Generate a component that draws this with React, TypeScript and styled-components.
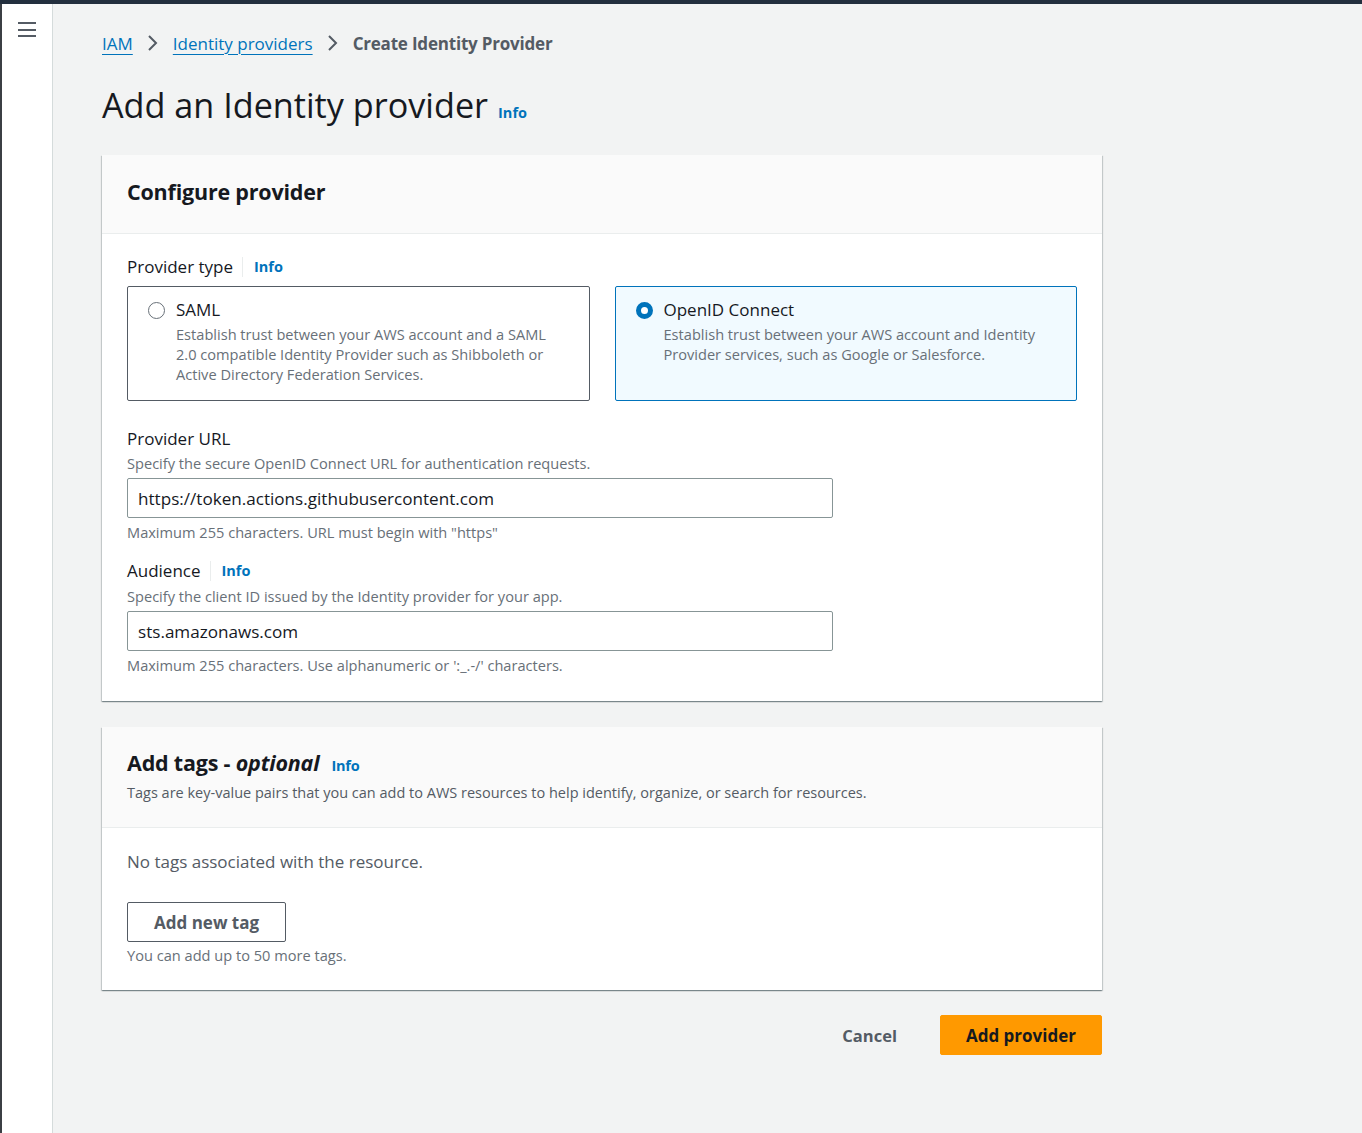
import React from "react";
import styled, { createGlobalStyle } from "styled-components";

const Global = createGlobalStyle`
  html, body { margin: 0; padding: 0; }
  body {
    font-family: "Open Sans", "Noto Sans", "Liberation Sans", sans-serif;
    color: #16191f;
    background: #f2f3f3;
  }
  * { box-sizing: border-box; }
`;

const Page = styled.div`
  width: 1362px;
  min-height: 1133px;
  display: flex;
  flex-direction: column;
  background: #f2f3f3;
`;

const TopStripe = styled.div`
  height: 4px;
  background: #232f3e;
`;

const Body = styled.div`
  flex: 1;
  display: flex;
`;

const SideNav = styled.nav`
  width: 53px;
  flex: none;
  background: #fff;
  border-left: 2px solid #3b3f44;
  border-right: 1px solid #d5dbdb;
  padding: 18px 0 0 16px;
`;

const Hamburger = styled.button`
  width: 20px;
  height: 15px;
  padding: 0;
  border: 0;
  background: transparent;
  display: flex;
  flex-direction: column;
  justify-content: space-between;
  cursor: pointer;
  span {
    display: block;
    height: 2px;
    width: 18px;
    background: #545b64;
  }
`;

const Main = styled.main`
  flex: 1;
  padding: 27px 0 60px 49px;
`;

const Content = styled.div`
  width: 1000px;
  display: flex;
  flex-direction: column;
`;

const Crumbs = styled.div`
  display: flex;
  align-items: center;
  height: 24px;
  font-size: 17px;
  gap: 13px;
`;

const CrumbLink = styled.a`
  color: #0073bb;
  text-decoration: underline;
  text-underline-offset: 4px;
  text-decoration-thickness: 1px;
`;

const CrumbCurrent = styled.span`
  color: #545b64;
  font-weight: 700;
  letter-spacing: -0.2px;
`;

const Chevron = styled.svg`
  width: 14px;
  height: 20px;
`;

const TitleRow = styled.div`
  display: flex;
  align-items: baseline;
  gap: 10px;
  margin-top: 28px;
`;

const H1 = styled.h1`
  margin: 0;
  font-size: 34.2px;
  font-weight: 400;
  line-height: 44px;
  color: #16191f;
`;

const InfoLink = styled.a`
  color: #0073bb;
  font-weight: 700;
  font-size: 14.5px;
  text-decoration: none;
`;

const Card = styled.section<{ $mt: number }>`
  margin-top: ${(p) => p.$mt}px;
  background: #fff;
  box-shadow: 0 1px 1px 0 rgba(0, 28, 36, 0.3), 1px 1px 1px 0 rgba(0, 28, 36, 0.15),
    -1px 1px 1px 0 rgba(0, 28, 36, 0.15);
`;

const CardHeader = styled.header<{ $pt: number; $pb: number }>`
  background: #fafafa;
  border-bottom: 1px solid #eaeded;
  padding: ${(p) => p.$pt}px 25px ${(p) => p.$pb}px;
`;

const CardTitle = styled.h2`
  margin: 0;
  font-size: 21.5px;
  line-height: 28px;
  font-weight: 700;
  letter-spacing: -0.2px;
  display: flex;
  align-items: baseline;
  gap: 12px;
  em { font-style: italic; }
`;

const CardDesc = styled.p`
  margin: 3px 0 0;
  font-size: 14.5px;
  line-height: 20px;
  color: #545b64;
`;

const CardBody = styled.div<{ $pt: number; $pb: number }>`
  padding: ${(p) => p.$pt}px 25px ${(p) => p.$pb}px;
  display: flex;
  flex-direction: column;
`;

const LabelRow = styled.div<{ $mt?: number }>`
  display: flex;
  align-items: center;
  margin-top: ${(p) => p.$mt ?? 0}px;
  font-size: 17px;
  line-height: 22px;
`;

const Sep = styled.span`
  width: 1px;
  height: 20px;
  background: #eaeded;
  margin: 0 11px 0 9px;
`;

const Tiles = styled.div`
  display: grid;
  grid-template-columns: 1fr 1fr;
  gap: 25px;
  margin-top: 8px;
`;

const Tile = styled.label<{ $selected?: boolean }>`
  height: 115px;
  border: 1px solid ${(p) => (p.$selected ? "#0073bb" : "#545b64")};
  background: ${(p) => (p.$selected ? "#f1faff" : "#fff")};
  border-radius: 2px;
  padding: 11px 30px 0 20px;
  display: grid;
  grid-template-columns: 16px 1fr;
  column-gap: 12px;
  align-content: start;
`;

const Radio = styled.span<{ $checked?: boolean }>`
  width: 17px;
  height: 17px;
  border-radius: 50%;
  margin-top: 4px;
  border: ${(p) => (p.$checked ? "5px solid #0073bb" : "1.5px solid #687078")};
  background: #fff;
`;

const TileTitle = styled.span`
  font-size: 17px;
  line-height: 24px;
  color: #16191f;
`;

const TileDesc = styled.span`
  grid-column: 2;
  margin-top: 2px;
  font-size: 14.6px;
  line-height: 20px;
  color: #687078;
`;

const Hint = styled.div<{ $mt?: number }>`
  margin-top: ${(p) => p.$mt ?? 0}px;
  font-size: 14.6px;
  line-height: 20px;
  color: #687078;
`;

const Input = styled.input`
  width: 706px;
  height: 40px;
  margin-top: 5px;
  border: 1px solid #879596;
  border-radius: 2px;
  padding: 0 10px;
  font-family: inherit;
  font-size: 17.1px;
  color: #16191f;
  background: #fff;
`;

const Empty = styled.div`
  font-size: 17px;
  line-height: 22px;
  color: #545b64;
`;

const Button = styled.button<{ $variant: "normal" | "primary" | "link" }>`
  height: 40px;
  font-family: inherit;
  font-size: ${(p) => (p.$variant === "link" ? 16.5 : 17)}px;
  font-weight: 700;
  border-radius: 2px;
  cursor: pointer;
  padding: 0 ${(p) => (p.$variant === "normal" ? 26 : p.$variant === "primary" ? 25 : 20)}px;
  border: 1px solid
    ${(p) => (p.$variant === "normal" ? "#545b64" : p.$variant === "primary" ? "#ff9900" : "transparent")};
  background: ${(p) => (p.$variant === "primary" ? "#ff9900" : p.$variant === "normal" ? "#fff" : "transparent")};
  color: ${(p) => (p.$variant === "primary" ? "#16191f" : "#545b64")};
`;

const TagButtonWrap = styled.div`
  margin-top: 29px;
  display: flex;
`;

const Footer = styled.div`
  margin-top: 25px;
  display: flex;
  justify-content: flex-end;
  gap: 22px;
`;

const ChevronIcon = () => (
  <Chevron viewBox="0 0 14 20" fill="none">
    <path d="M3 3l7 7-7 7" stroke="#545b64" strokeWidth="2" />
  </Chevron>
);

export default function App() {
  return (
    <Page>
      <Global />
      <TopStripe />
      <Body>
        <SideNav>
          <Hamburger aria-label="Open navigation">
            <span />
            <span />
            <span />
          </Hamburger>
        </SideNav>
        <Main>
          <Content>
            <Crumbs>
              <CrumbLink>IAM</CrumbLink>
              <ChevronIcon />
              <CrumbLink>Identity providers</CrumbLink>
              <ChevronIcon />
              <CrumbCurrent>Create Identity Provider</CrumbCurrent>
            </Crumbs>

            <TitleRow>
              <H1>Add an Identity provider</H1>
              <InfoLink>Info</InfoLink>
            </TitleRow>

            <Card $mt={28}>
              <CardHeader $pt={23} $pb={27}>
                <CardTitle>Configure provider</CardTitle>
              </CardHeader>
              <CardBody $pt={22} $pb={26}>
                <LabelRow>
                  Provider type
                  <Sep />
                  <InfoLink>Info</InfoLink>
                </LabelRow>
                <Tiles>
                  <Tile>
                    <Radio />
                    <TileTitle>SAML</TileTitle>
                    <TileDesc>
                      Establish trust between your AWS account and a SAML 2.0 compatible Identity Provider such as
                      Shibboleth or Active Directory Federation Services.
                    </TileDesc>
                  </Tile>
                  <Tile $selected>
                    <Radio $checked />
                    <TileTitle>OpenID Connect</TileTitle>
                    <TileDesc>
                      Establish trust between your AWS account and Identity Provider services, such as Google or
                      Salesforce.
                    </TileDesc>
                  </Tile>
                </Tiles>

                <LabelRow $mt={27}>Provider URL</LabelRow>
                <Hint $mt={3}>Specify the secure OpenID Connect URL for authentication requests.</Hint>
                <Input defaultValue="https://token.actions.githubusercontent.com" />
                <Hint $mt={4}>Maximum 255 characters. URL must begin with "https"</Hint>

                <LabelRow $mt={18}>
                  Audience
                  <Sep />
                  <InfoLink>Info</InfoLink>
                </LabelRow>
                <Hint $mt={4}>Specify the client ID issued by the Identity provider for your app.</Hint>
                <Input defaultValue="sts.amazonaws.com" />
                <Hint $mt={4}>Maximum 255 characters. Use alphanumeric or ':_.-/' characters.</Hint>
              </CardBody>
            </Card>

            <Card $mt={26}>
              <CardHeader $pt={22} $pb={24}>
                <CardTitle>
                  <span>
                    Add tags - <em>optional</em>
                  </span>
                  <InfoLink>Info</InfoLink>
                </CardTitle>
                <CardDesc>
                  Tags are key-value pairs that you can add to AWS resources to help identify, organize, or search for
                  resources.
                </CardDesc>
              </CardHeader>
              <CardBody $pt={23} $pb={25}>
                <Empty>No tags associated with the resource.</Empty>
                <TagButtonWrap>
                  <Button $variant="normal">Add new tag</Button>
                </TagButtonWrap>
                <Hint $mt={3}>You can add up to 50 more tags.</Hint>
              </CardBody>
            </Card>

            <Footer>
              <Button $variant="link">Cancel</Button>
              <Button $variant="primary">Add provider</Button>
            </Footer>
          </Content>
        </Main>
      </Body>
    </Page>
  );
}
